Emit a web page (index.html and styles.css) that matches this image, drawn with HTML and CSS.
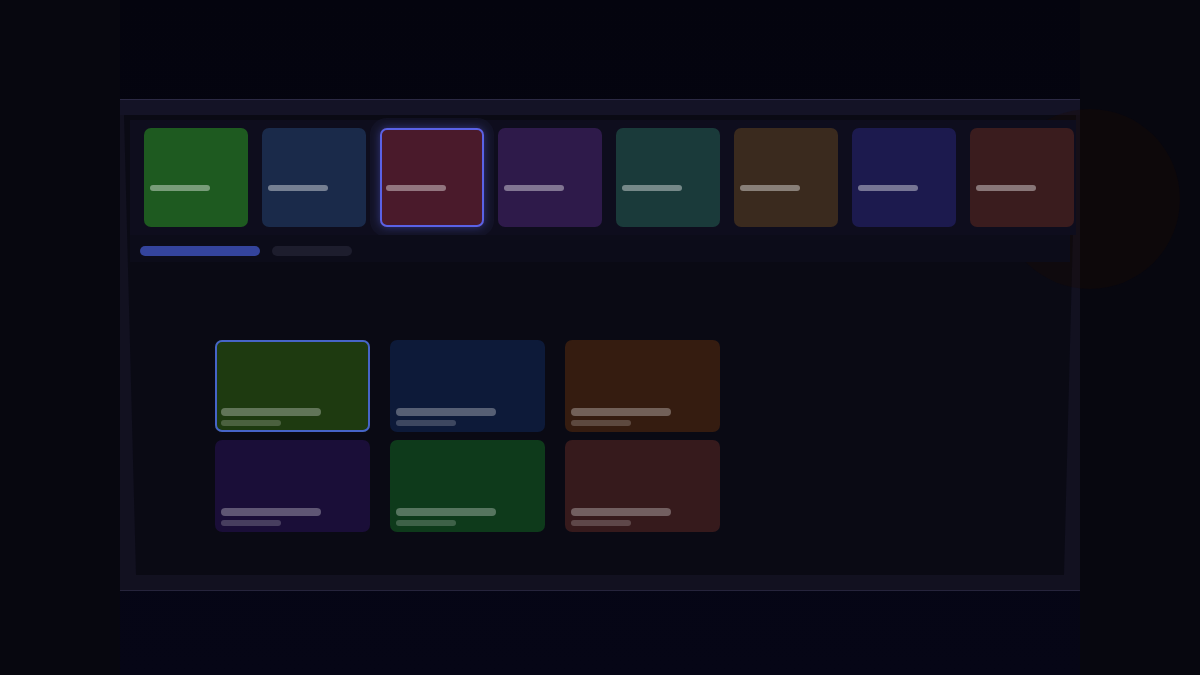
FILE: index.html
```html
<!DOCTYPE html>
<html>
<head>
<meta charset="utf-8">
<link rel="stylesheet" href="styles.css">
</head>
<body>
<div class="page">
  <div class="side"></div>
  <div class="center">
    <div class="frame">
      <div class="topbar"></div>
      <div class="body">
        <div class="strip">
          <div class="tile t1"><span class="tbar"></span></div>
          <div class="tile t2"><span class="tbar"></span></div>
          <div class="tile t3 selected"><span class="tbar"></span></div>
          <div class="tile t4"><span class="tbar"></span></div>
          <div class="tile t5"><span class="tbar"></span></div>
          <div class="tile t6"><span class="tbar"></span></div>
          <div class="tile t7"><span class="tbar"></span></div>
          <div class="tile t8"><span class="tbar"></span></div>
        </div>
        <div class="progress">
          <span class="pbar active"></span>
          <span class="pbar"></span>
        </div>
        <div class="grid">
          <div class="card c1 selected"><span class="b1"></span><span class="b2"></span></div>
          <div class="card c2"><span class="b1"></span><span class="b2"></span></div>
          <div class="card c3"><span class="b1"></span><span class="b2"></span></div>
          <div class="card c4"><span class="b1"></span><span class="b2"></span></div>
          <div class="card c5"><span class="b1"></span><span class="b2"></span></div>
          <div class="card c6"><span class="b1"></span><span class="b2"></span></div>
        </div>
      </div>
      <div class="bottombar"></div>
    </div>
  </div>
  <div class="side"></div>
  <div class="glow"></div>
</div>
</body>
</html>
```

FILE: styles.css
```css
html, body {
  margin: 0;
  padding: 0;
  background: #06060e;
  font-family: "Liberation Sans", sans-serif;
}

.page {
  position: relative;
  width: 1200px;
  height: 675px;
  display: flex;
  overflow: hidden;
}

.side {
  width: 120px;
  flex: none;
  background: #07070f;
}

.center {
  width: 960px;
  flex: none;
  padding-top: 99px;
  background: linear-gradient(180deg, #04040e 0%, #050514 60%, #060616 100%);
}

.frame {
  border-top: 1px solid #2b2944;
  border-bottom: 1px solid #26243c;
  background: #121120;
}

.topbar {
  height: 15px;
  background: #141326;
}

.body {
  position: relative;
  height: 460px;
  display: flex;
  flex-direction: column;
}

.body::before {
  content: "";
  position: absolute;
  inset: 0;
  background: #0a0a14;
  clip-path: polygon(4px 0, 956px 0, 944px 460px, 16px 460px);
  z-index: 0;
}

.body > * {
  position: relative;
  z-index: 1;
}

.strip {
  margin: 5px 4px 0 10px;
  padding: 8px 2px 8px 14px;
  background: #0e0d1d;
  display: flex;
  gap: 14px;
}

.tile {
  width: 104px;
  height: 99px;
  flex: none;
  border-radius: 7px;
  box-sizing: border-box;
  padding: 57px 0 0 6px;
}

.tbar {
  display: block;
  width: 60px;
  height: 6px;
  border-radius: 3px;
  background: rgba(255, 255, 255, 0.4);
}

.t1 { background: #1e5a20; }
.t2 { background: #1a2a4a; }
.t3 { background: #4a1a2b; }
.t4 { background: #2e1a4a; }
.t5 { background: #1a3a3a; }
.t6 { background: #3a2a1e; }
.t7 { background: #1c1a4e; }
.t8 { background: #3a1c1e; }

.tile.selected {
  box-shadow: inset 0 0 0 2px #5a62e6, 0 0 8px rgba(90, 100, 240, 0.45), 0 0 0 10px rgba(26, 26, 52, 0.45);
}

.progress {
  margin: 0 10px 0 10px;
  padding: 11px 10px 6px;
  background: #0c0c19;
  display: flex;
  gap: 12px;
}

.pbar {
  display: block;
  width: 80px;
  height: 10px;
  border-radius: 5px;
  background: #1d1d2d;
}

.pbar.active {
  width: 120px;
  background: #34449c;
}

.grid {
  margin: 78px 0 0 95px;
  display: grid;
  grid-template-columns: repeat(3, 155px);
  grid-auto-rows: 92px;
  column-gap: 20px;
  row-gap: 8px;
}

.card {
  border-radius: 7px;
  box-sizing: border-box;
  padding: 0 0 6px 6px;
  display: flex;
  flex-direction: column;
  justify-content: flex-end;
  gap: 4px;
}

.card .b1 {
  display: block;
  width: 100px;
  height: 8px;
  border-radius: 4px;
  background: rgba(255, 255, 255, 0.3);
}

.card .b2 {
  display: block;
  width: 60px;
  height: 6px;
  border-radius: 3px;
  background: rgba(255, 255, 255, 0.2);
}

.c1 { background: #1e3a10; }
.c2 { background: #0d1a39; }
.c3 { background: #351c10; }
.c4 { background: #1a0e38; }
.c5 { background: #0e3a1b; }
.c6 { background: #361a1c; }

.card.selected {
  box-shadow: inset 0 0 0 2px #4664c8;
}

.bottombar {
  height: 15px;
  background: #121120;
}

.glow {
  position: absolute;
  left: 1000px;
  top: 109px;
  width: 180px;
  height: 180px;
  border-radius: 50%;
  background: rgba(28, 12, 0, 0.28);
  pointer-events: none;
}
```
